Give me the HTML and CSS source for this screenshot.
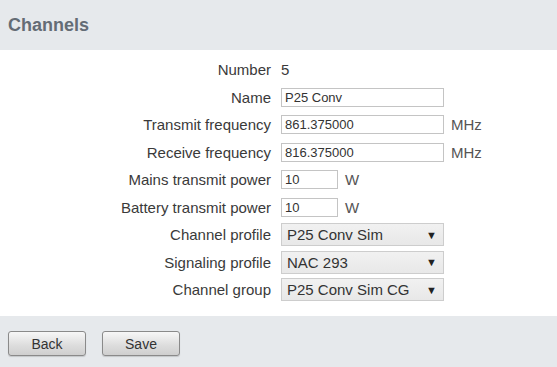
FILE: index.html
```html
<!DOCTYPE html>
<html lang="en">
<head>
    <meta charset="UTF-8">
    <meta name="viewport" content="width=device-width, initial-scale=1.0">
    <title>Channels</title>
    <link rel="stylesheet" href="styles.css">
</head>
<body>
    <div class="header">
        <h1>Channels</h1>
    </div>

    <div class="form">
        <label>Number</label>
        <div class="field"><span class="value">5</span></div>

        <label>Name</label>
        <div class="field"><input class="text" type="text" value="P25 Conv"></div>

        <label>Transmit frequency</label>
        <div class="field"><input class="text" type="text" value="861.375000"><span class="unit">MHz</span></div>

        <label>Receive frequency</label>
        <div class="field"><input class="text" type="text" value="816.375000"><span class="unit">MHz</span></div>

        <label>Mains transmit power</label>
        <div class="field"><input class="text small" type="text" value="10"><span class="unit">W</span></div>

        <label>Battery transmit power</label>
        <div class="field"><input class="text small" type="text" value="10"><span class="unit">W</span></div>

        <label>Channel profile</label>
        <div class="field"><div class="select"><span>P25 Conv Sim</span><span class="arrow">&#9660;</span></div></div>

        <label>Signaling profile</label>
        <div class="field"><div class="select"><span>NAC 293</span><span class="arrow">&#9660;</span></div></div>

        <label>Channel group</label>
        <div class="field"><div class="select"><span>P25 Conv Sim CG</span><span class="arrow">&#9660;</span></div></div>
    </div>

    <div class="footer">
        <button class="btn">Back</button>
        <button class="btn">Save</button>
    </div>
</body>
</html>
```

FILE: styles.css
```css
body {
    margin: 0;
    font-family: "Liberation Sans", Arial, sans-serif;
    color: #333;
    background-color: #fff;
}
.header {
    height: 50px;
    background-color: #e6e9ec;
    display: flex;
    align-items: center;
    padding: 0 8px;
}
.header h1 {
    margin: 0;
    font-size: 18px;
    font-weight: bold;
    color: #646c75;
}
.form {
    display: grid;
    grid-template-columns: 271px 1fr;
    grid-auto-rows: 27.5px;
    column-gap: 10px;
    align-items: center;
    padding: 6px 0 12.5px;
    font-size: 15px;
}
.form label {
    text-align: right;
    color: #3a3a3a;
}
.field {
    display: flex;
    align-items: center;
}
.value {
    color: #3a3a3a;
}
input.text {
    box-sizing: border-box;
    width: 163px;
    height: 19px;
    margin: 0;
    padding: 0 3px;
    border: 1px solid #c4c4c4;
    font-family: "Liberation Sans", Arial, sans-serif;
    font-size: 13px;
    color: #333;
}
input.small {
    width: 57px;
}
.unit {
    margin-left: 7px;
    color: #555;
}
.select {
    box-sizing: border-box;
    width: 163px;
    height: 23px;
    display: flex;
    align-items: center;
    justify-content: space-between;
    padding: 0 6px 0 5px;
    border: 1px solid #cdcdcd;
    background: linear-gradient(#f1f1f1, #e8e8e8);
    font-size: 15px;
    color: #333;
}
.arrow {
    font-size: 11px;
    color: #222;
}
.footer {
    background-color: #e6e9ec;
    height: 51px;
    display: flex;
    align-items: flex-start;
    gap: 16px;
    padding: 15px 8px 0;
    box-sizing: border-box;
}
.btn {
    width: 78px;
    height: 25px;
    border: 1px solid #8a8a8a;
    border-radius: 3px;
    background: linear-gradient(#f7f7f7, #dcdcdc 60%, #cfcfcf);
    font-family: "Liberation Sans", Arial, sans-serif;
    font-size: 14px;
    color: #333;
    box-shadow: 0 1px 1px rgba(0, 0, 0, 0.15);
}
```
